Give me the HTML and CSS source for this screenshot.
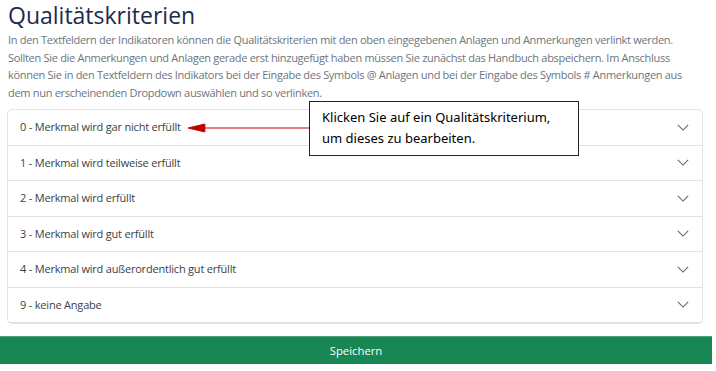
FILE: index.html
```html
<!DOCTYPE html>
<html lang="de">
<head>
    <meta charset="UTF-8">
    <meta name="viewport" content="width=device-width, initial-scale=1.0">
    <title>Qualitätskriterien</title>
    <link rel="stylesheet" href="styles.css">
</head>
<body>
    <div class="page">
        <h1 class="page-title">Qualitätskriterien</h1>
        <p class="intro">
            In den Textfeldern der Indikatoren können die Qualitätskriterien mit den oben eingegebenen Anlagen und Anmerkungen verlinkt werden.
            Sollten Sie die Anmerkungen und Anlagen gerade erst hinzugefügt haben müssen Sie zunächst das Handbuch abspeichern. Im Anschluss
            können Sie in den Textfeldern des Indikators bei der Eingabe des Symbols @ Anlagen und bei der Eingabe des Symbols # Anmerkungen aus
            dem nun erscheinenden Dropdown auswählen und so verlinken.
        </p>

        <div class="accordion">
            <div class="accordion-item">
                <span>0 - Merkmal wird gar nicht erfüllt</span>
                <svg class="chevron" viewBox="0 0 14 8"><path d="M1 1l6 6 6-6"/></svg>
            </div>
            <div class="accordion-item">
                <span>1 - Merkmal wird teilweise erfüllt</span>
                <svg class="chevron" viewBox="0 0 14 8"><path d="M1 1l6 6 6-6"/></svg>
            </div>
            <div class="accordion-item">
                <span>2 - Merkmal wird erfüllt</span>
                <svg class="chevron" viewBox="0 0 14 8"><path d="M1 1l6 6 6-6"/></svg>
            </div>
            <div class="accordion-item">
                <span>3 - Merkmal wird gut erfüllt</span>
                <svg class="chevron" viewBox="0 0 14 8"><path d="M1 1l6 6 6-6"/></svg>
            </div>
            <div class="accordion-item">
                <span>4 - Merkmal wird außerordentlich gut erfüllt</span>
                <svg class="chevron" viewBox="0 0 14 8"><path d="M1 1l6 6 6-6"/></svg>
            </div>
            <div class="accordion-item">
                <span>9 - keine Angabe</span>
                <svg class="chevron" viewBox="0 0 14 8"><path d="M1 1l6 6 6-6"/></svg>
            </div>

            <!-- hint overlay -->
            <div class="hint">
                <svg class="hint-arrow" viewBox="0 0 122 10"><path d="M0 5l17-4v8z"/><line x1="15" y1="5" x2="122" y2="5"/></svg>
                <div class="hint-box">Klicken Sie auf ein Qualitätskriterium,<br>um dieses zu bearbeiten.</div>
            </div>
        </div>
    </div>

    <button class="save-btn">Speichern</button>
</body>
</html>
```

FILE: styles.css
```css
body {
    margin: 0;
    font-family: "Open Sans", "Noto Sans", sans-serif;
    background: #fff;
    color: #212529;
}

.page {
    padding: 0 8px 0 8px;
}

.page-title {
    margin: 0;
    font-size: 23px;
    font-weight: 400;
    line-height: 30px;
    color: #1c2b4f;
}

.intro {
    max-width: 689px;
    margin: 1px 0 0;
    font-size: 11px;
    letter-spacing: -0.3px;
    line-height: 17.5px;
    color: #6c757d;
}

.accordion {
    position: relative;
    width: 696px;
    margin: 8px 0 0 -1px;
    border: 1px solid #dfe2e6;
    border-radius: 5px;
    box-sizing: border-box;
}

.accordion-item {
    display: flex;
    justify-content: space-between;
    align-items: center;
    padding: 8.25px 13px 8.25px 12px;
    line-height: 18px;
    font-size: 11px;
    letter-spacing: -0.2px;
    color: #3a3f44;
    border-bottom: 1px solid #dfe2e6;
}

.accordion-item:last-of-type {
    border-bottom: none;
}

.chevron {
    width: 12px;
    height: 7px;
    fill: none;
    stroke: #666;
    stroke-width: 1.3;
}

.hint {
    position: absolute;
    left: 180px;
    top: -9px;
    display: flex;
    align-items: center;
}

.hint-arrow {
    width: 121px;
    height: 10px;
    margin-top: -2px;
    fill: #c00000;
    stroke: #c00000;
    stroke-width: 1;
}

.hint-box {
    width: 256px;
    padding: 5px 0 6px 12px;
    background: #fff;
    border: 1.5px solid #222;
    font-family: "Noto Sans", sans-serif;
    font-size: 13px;
    line-height: 21px;
    color: #000;
}

.save-btn {
    display: block;
    width: 712px;
    height: 28px;
    margin-top: 12px;
    padding: 0;
    border: none;
    border-top: 1px solid #4ea37c;
    background: #198754;
    color: #fff;
    font-family: "Open Sans", "Noto Sans", sans-serif;
    font-size: 11.3px;
}
```
